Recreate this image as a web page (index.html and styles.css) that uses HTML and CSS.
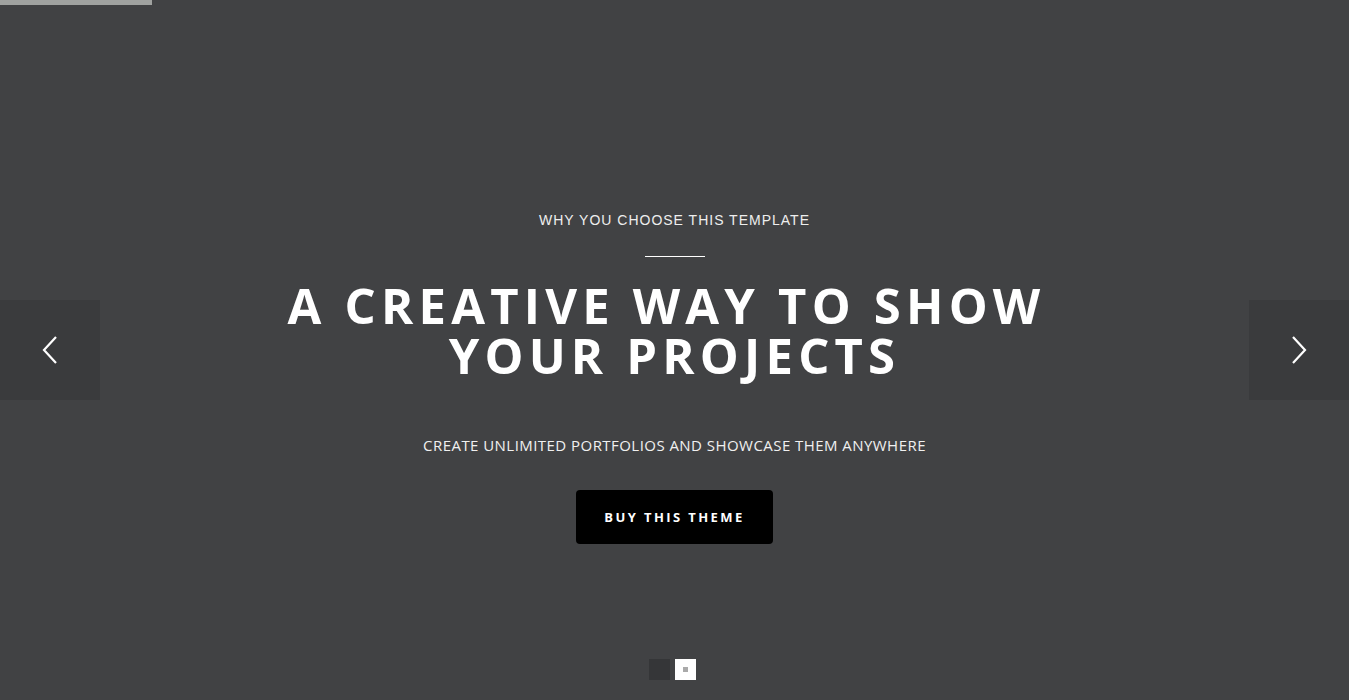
FILE: index.html
```html
<!DOCTYPE html>
<html>
<head>
<meta charset="utf-8">
<link rel="stylesheet" href="styles.css">
</head>
<body>
<div class="slider">
  <div class="progress"></div>
  <button class="arrow arrow-left" aria-label="Previous">
    <svg width="18" height="30" viewBox="0 0 18 30"><polyline points="15,2 3,15 15,28" fill="none" stroke="#fff" stroke-width="2.2"/></svg>
  </button>
  <div class="content">
    <p class="eyebrow">WHY YOU CHOOSE THIS TEMPLATE</p>
    <div class="divider"></div>
    <h1 class="title"><span class="line-one">A CREATIVE WAY TO SHOW</span><br>YOUR PROJECTS</h1>
    <p class="sub">CREATE UNLIMITED PORTFOLIOS AND SHOWCASE THEM ANYWHERE</p>
    <a class="btn" href="#">BUY THIS THEME</a>
  </div>
  <button class="arrow arrow-right" aria-label="Next">
    <svg width="18" height="30" viewBox="0 0 18 30"><polyline points="3,2 15,15 3,28" fill="none" stroke="#fff" stroke-width="2.2"/></svg>
  </button>
  <div class="dots">
    <span class="dot"></span>
    <span class="dot active"></span>
  </div>
</div>
</body>
</html>
```
FILE: styles.css
```css
* { box-sizing: border-box; }
html, body { margin: 0; padding: 0; }
body { background: #414244; font-family: "Open Sans", sans-serif; }
.slider {
  position: relative;
  width: 100%;
  height: 700px;
  background: #414244;
  display: flex;
  align-items: flex-start;
  justify-content: center;
  overflow: hidden;
}
.progress {
  position: absolute;
  left: 0; top: 0;
  width: 152px; height: 5px;
  background: #a0a2a0;
}
.arrow {
  position: absolute;
  top: 300px;
  width: 100px; height: 100px;
  background: #3a3b3d;
  border: 0;
  padding: 0;
  display: flex;
  align-items: center;
  justify-content: center;
  cursor: pointer;
}
.arrow-left { left: 0; }
.arrow-right { right: 0; }
.content {
  display: flex;
  flex-direction: column;
  align-items: center;
  text-align: center;
  padding-top: 212px;
  color: #fff;
}
.eyebrow {
  margin: 0;
  font-family: "Liberation Sans", Arial, sans-serif;
  font-size: 14px;
  line-height: 17px;
  letter-spacing: 1px;
  color: #eeeeee;
}
.divider {
  width: 60px; height: 1px;
  background: #fff;
  margin-top: 27px;
}
.title {
  margin: 23px 0 0;
  font-family: "Open Sans", sans-serif;
  font-weight: 700;
  font-size: 49px;
  line-height: 50px;
  letter-spacing: 5.2px;
  color: #fff;
}
.line-one {
  display: inline-block;
  padding-right: 16px;
}
.sub {
  margin: 56px 0 0;
  font-size: 15px;
  line-height: 19px;
  letter-spacing: 0.45px;
  color: #f0f0f0;
}
.btn {
  margin-top: 35px;
  width: 197px; height: 54px;
  background: #000;
  border-radius: 4px;
  color: #fff;
  text-decoration: none;
  font-family: "Open Sans", sans-serif;
  font-weight: 700;
  font-size: 13px;
  letter-spacing: 2.4px;
  display: flex;
  align-items: center;
  justify-content: center;
}
.dots {
  position: absolute;
  top: 659px;
  left: 649px;
  display: flex;
  gap: 5px;
}
.dot {
  width: 21px; height: 21px;
  background: #353638;
  display: flex;
  align-items: center;
  justify-content: center;
}
.dot.active { background: #fff; }
.dot.active::after {
  content: "";
  width: 5px; height: 5px;
  background: #aaa;
}
```
